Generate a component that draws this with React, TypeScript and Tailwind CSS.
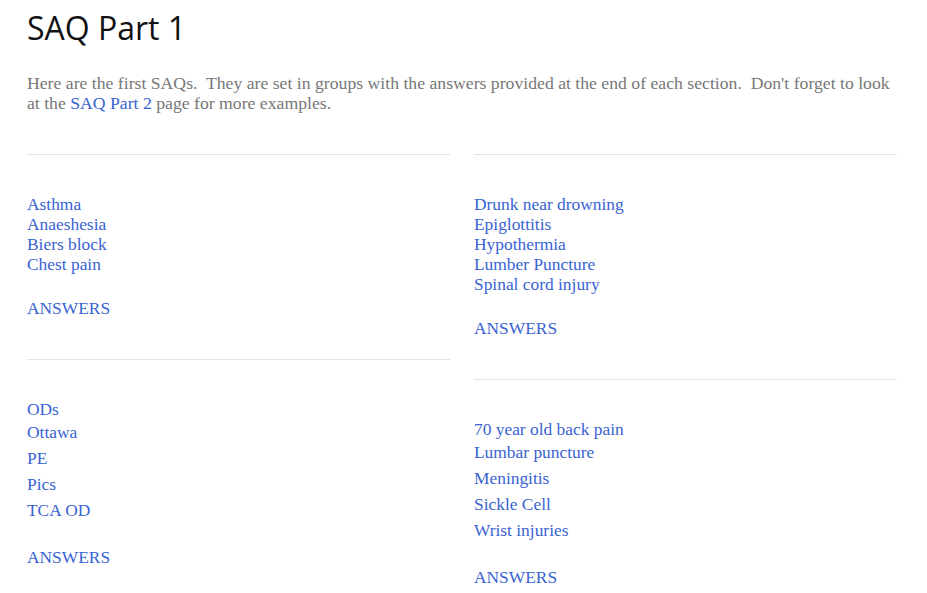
const serif = "font-['Liberation_Serif',serif]";

function Rule() {
  return <div className="h-px bg-[#e3e3e3]" />;
}

function Link({ children }: { children: React.ReactNode }) {
  return <a className="text-[#3a63d2] cursor-pointer">{children}</a>;
}

interface GroupProps {
  tight: string[];
  loose?: string[];
  answersGap: string;
}

function Group({ tight, loose = [], answersGap }: GroupProps) {
  return (
    <div className="pt-[39px]">
      <div className="flex flex-col leading-[20px]">
        {tight.map((t, i) => (
          <div key={t} className={loose.length && i > 0 ? 'mt-[3px]' : ''}>
            <Link>{t}</Link>
          </div>
        ))}
      </div>
      {loose.map((t) => (
        <div key={t} className="mt-[6px] leading-[20px]">
          <Link>{t}</Link>
        </div>
      ))}
      <div className={`${answersGap} leading-[20px]`}>
        <Link>ANSWERS</Link>
      </div>
    </div>
  );
}

export default function App() {
  return (
    <div className="min-h-[593px] w-[927px] bg-white px-[27px]">
      <h1 className="pt-[9px] font-['Open_Sans',sans-serif] text-[32px] leading-[38px] text-[#111]">SAQ Part 1</h1>
      <p className={`${serif} mt-[26px] w-[870px] text-[17.7px] leading-[20px] text-[#777]`}>
        Here are the first SAQs.&nbsp; They are set in groups with the answers provided at the end of each section.&nbsp; Don't forget to look at the <Link>SAQ Part 2</Link> page for more examples.
      </p>
      <div className={`${serif} mt-[41px] grid w-[870px] grid-cols-2 gap-x-[24px] text-[17.4px]`}>
        <div className="flex flex-col">
          <Rule />
          <Group tight={['Asthma', 'Anaeshesia', 'Biers block', 'Chest pain']} answersGap="mt-[24px]" />
          <div className="mt-[41px]">
            <Rule />
          </div>
          <Group tight={['ODs', 'Ottawa']} loose={['PE', 'Pics', 'TCA OD']} answersGap="mt-[27px]" />
        </div>
        <div className="flex flex-col">
          <Rule />
          <Group
            tight={['Drunk near drowning', 'Epiglottitis', 'Hypothermia', 'Lumber Puncture', 'Spinal cord injury']}
            answersGap="mt-[24px]"
          />
          <div className="mt-[41px]">
            <Rule />
          </div>
          <Group
            tight={['70 year old back pain', 'Lumbar puncture']}
            loose={['Meningitis', 'Sickle Cell', 'Wrist injuries']}
            answersGap="mt-[27px]"
          />
        </div>
      </div>
    </div>
  );
}
